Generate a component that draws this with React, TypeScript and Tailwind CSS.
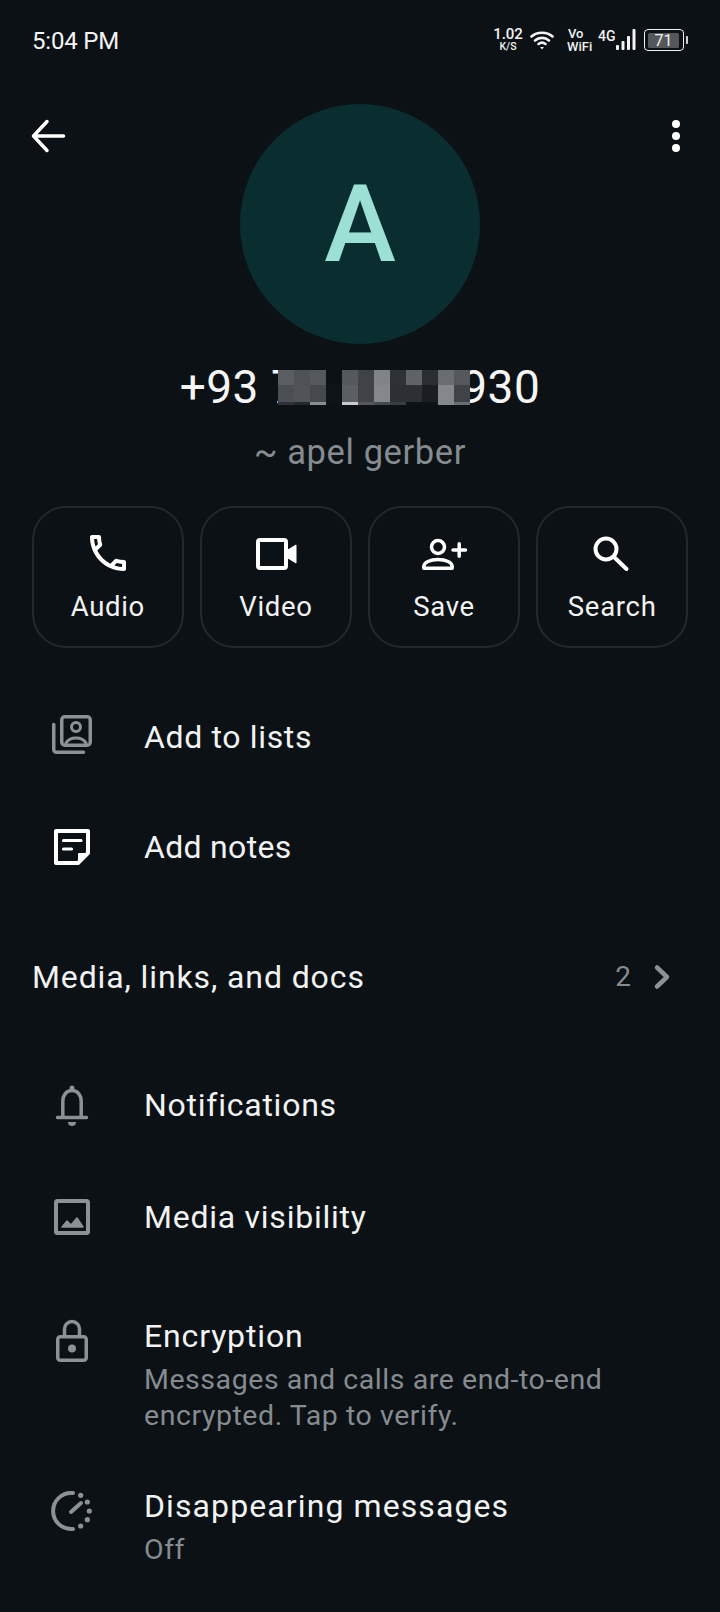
import React from "react";

const mosaic = [
  ["#5a5d61","#4e5256","#55585c","#0b1115","#55585c","#3f4347","#808487","#2e3236","#5f6266","#2a2e32","#6a6d70","#54575b"],
  ["#4b4e52","#505357","#45494c","#0e1317","#5b5e62","#3f4347","#85888b","#2c3034","#2c3034","#1a1e22","#85888b","#3f4347"],
  ["#2e3236","#24282c","#8a8d90","#0e1317","#c8cacb","#55585c","#45494c","#3a3d41","#0e1317","#0e1317","#85888b","#6a6d70"],
];

function Ico({ children, color = "#ffffff" }: { children: React.ReactNode; color?: string }) {
  return (
    <svg width="48" height="48" viewBox="0 0 48 48" fill="none" stroke={color} strokeLinecap="round" strokeLinejoin="round" className="shrink-0">
      {children}
    </svg>
  );
}

const G = "#8d9195";

function ActionButton({ label, icon }: { label: string; icon: React.ReactNode }) {
  return (
    <div className="h-[142px] rounded-[34px] border-2 border-[#25292d] flex flex-col items-center pt-[21px]">
      {icon}
      <div className="text-[27.5px] leading-[36px] mt-[12px] tracking-[0.7px] text-[#f1f2f2]">{label}</div>
    </div>
  );
}

function Row({ icon, title, sub, className, track = "tracking-[0.75px]" }: { icon: React.ReactNode; title: string; sub?: React.ReactNode; className: string; track?: string }) {
  return (
    <div className={`flex pl-[48px] ${className}`}>
      <div className="w-[96px] shrink-0">{icon}</div>
      <div>
        <div className={`text-[32px] leading-[44px] text-[#f1f2f2] ${track}`}>{title}</div>
        {sub && <div className="text-[28.5px] leading-[36px] tracking-[0.55px] text-[#868b90] mt-[4px]">{sub}</div>}
      </div>
    </div>
  );
}

export default function App() {
  return (
    <div className="w-[720px] h-[1612px] overflow-hidden bg-[#0b1115] text-white flex flex-col font-['Roboto',sans-serif]">
      {/* status bar */}
      <div className="h-[80px] shrink-0 flex items-center justify-between pl-[32px] pr-[32px]">
        <div className="text-[24px] leading-[30px] mt-[1px] text-[#f4f4f4] tracking-[-0.2px]">5:04 PM</div>
        <div className="flex items-center text-[#f2f2f2] font-medium">
          <div className="flex flex-col items-center w-[28px] -mt-[1px]">
            <div className="text-[15px] leading-[15px]">1.02</div>
            <div className="text-[10.5px] leading-[10.5px]">K/S</div>
          </div>
          <svg width="24" height="20" viewBox="0 0 24 20" fill="none" stroke="#f4f4f4" strokeWidth="2.6" strokeLinecap="round" className="ml-[8px]">
            <path d="M1.5 6.5C7 1.5 17 1.5 22.5 6.5" />
            <path d="M5 10.5C9 7 15 7 19 10.5" />
            <path d="M8.5 14C10.5 12.5 13.500 12.500 15.500 14" />
            <path d="M10 17h4l-2 2.500z" fill="#f4f4f4" stroke="none" />
          </svg>
          <div className="flex flex-col items-start ml-[13px] w-[25px]">
            <div className="text-[13px] leading-[13px] pl-[1px]">Vo</div>
            <div className="text-[13px] leading-[13px]">WiFi</div>
          </div>
          <div className="text-[14px] leading-[14px] ml-[6px] -mt-[8px]">4G</div>
          <svg width="20" height="22" viewBox="0 0 20 22" fill="#f4f4f4" className="ml-[0px]">
            <rect x="0" y="16" width="3" height="5" rx="1" />
            <rect x="5.500" y="12" width="3" height="9" rx="1" />
            <rect x="11" y="7" width="3" height="14" rx="1" />
            <rect x="16.500" y="0" width="3" height="21" rx="1" />
          </svg>
          <div className="ml-[8px] w-[40px] h-[22px] rounded-[4px] border-[1.5px] border-[#f0f0f0] flex items-center justify-center">
            <div className="w-[31px] h-[15px] rounded-[1.5px] bg-[#55585b] text-[#f0f0f0] text-[16px] leading-[15px] font-normal text-center">71</div>
          </div>
          <div className="ml-[2px] w-[2.500px] h-[8px] bg-[#d0d0d0] rounded-r-[1px]" />
        </div>
      </div>

      {/* top / avatar */}
      <div className="flex justify-between items-start px-[24px] pt-[24px] shrink-0">
        <div className="mt-[8px]">
          <Ico>
            <path d="M39.500 24H10M23 9.500L9.500 24L23 38.500" strokeWidth="3.500" />
          </Ico>
        </div>
        <div className="w-[240px] h-[240px] rounded-full bg-[#0a2d30] flex items-center justify-center">
          <div className="text-[108px] leading-[108px] font-medium text-[#9ce0d5]">A</div>
        </div>
        <div className="mt-[8px]">
          <Ico>
            <circle cx="28" cy="12" r="4" fill="#fff" stroke="none" />
            <circle cx="28" cy="24" r="4" fill="#fff" stroke="none" />
            <circle cx="28" cy="36" r="4" fill="#fff" stroke="none" />
          </Ico>
        </div>
      </div>

      {/* number */}
      <div className="mt-[16px] h-[54px] flex items-center justify-center text-[46px] leading-[54px] tracking-[0.5px] text-[#f5f5f5] shrink-0">
        <span>+93 7</span>
        <div className="grid grid-cols-[repeat(12,16px)] grid-rows-[15px_17px_3px] -ml-[19px] relative mr-[-9px]">
          {mosaic.flat().map((c, i) => (
            <div key={i} style={{ backgroundColor: c }} />
          ))}
        </div>
        <span>930</span>
      </div>
      <div className="mt-[16px] text-center text-[34.500px] leading-[44px] tracking-[0.6px] text-[#868b90] shrink-0">~ apel gerber</div>

      {/* actions */}
      <div className="grid grid-cols-4 gap-[16.500px] px-[32px] mt-[32px] shrink-0">
        <ActionButton
          label="Audio"
          icon={
            <svg width="48" height="48" viewBox="0 0 24 24" fill="#ffffff">
              <path d="M6.540 5c.060.890.210 1.760.450 2.590l-1.200 1.200c-.410-1.200-.670-2.470-.760-3.790h1.510m9.860 12.020c.850.240 1.720.390 2.600.450v1.490c-1.320-.090-2.590-.350-3.800-.750l1.200-1.190M7.500 3H4c-.550 0-1 .450-1 1 0 9.390 7.610 17 17 17 .550 0 1-.450 1-1v-3.490c0-.550-.450-1-1-1-1.240 0-2.450-.200-3.570-.570-.100-.040-.210-.050-.310-.050-.260 0-.510.100-.710.290l-2.200 2.200c-2.830-1.450-5.150-3.760-6.590-6.590l2.200-2.200c.280-.280.360-.670.250-1.020C8.700 6.450 8.500 5.250 8.500 4c0-.550-.450-1-1-1z" />
            </svg>
          }
        />
        <ActionButton
          label="Video"
          icon={
            <Ico>
              <rect x="6" y="11" width="28" height="28" rx="2" strokeWidth="4" />
              <path d="M35 21.500L44 16V34L35 28.500Z" fill="#fff" strokeWidth="1" />
            </Ico>
          }
        />
        <ActionButton
          label="Save"
          icon={
            <Ico>
              <circle cx="18" cy="18" r="6.500" strokeWidth="3.500" />
              <path d="M3.800 39.200V37.500C3.800 33.500 10 30.500 18 30.500S32.200 33.500 32.200 37.500V39.200Z" strokeWidth="3.500" />
              <path d="M33 21h12.500M39.200 14.800v12.500" strokeWidth="3.500" />
            </Ico>
          }
        />
        <ActionButton
          label="Search"
          icon={
            <Ico>
              <circle cx="18" cy="20" r="10.500" strokeWidth="4" />
              <path d="M26 28L38.500 40" strokeWidth="4" />
            </Ico>
          }
        />
      </div>

      {/* rows */}
      <Row
        className="mt-[65px] items-center h-[48px] shrink-0"
        title="Add to lists"
        track="tracking-[0.65px]"
        icon={
          <Ico color={G}>
            <rect x="13.750" y="3.750" width="28.500" height="28.500" rx="3" strokeWidth="3.500" />
            <path d="M5.750 11.500V36.500a2.750 2.750 0 0 0 2.750 2.750H35.500" strokeWidth="3.500" />
            <circle cx="28" cy="14" r="4.500" strokeWidth="3" />
            <path d="M18 30C20 26.500 23.500 25 28 25S36 26.500 38 30" strokeWidth="3" />
          </Ico>
        }
      />
      <Row
        className="mt-[62px] items-center h-[48px] shrink-0"
        title="Add notes"
        track="tracking-[0.3px]"
        icon={
          <Ico>
            <path d="M8 8H40V30L30 40H8Z" strokeWidth="4" />
            <path d="M31 39V31H39Z" fill="#fff" strokeWidth="2" />
            <path d="M15.500 17.500H33M15.500 26H23.500" strokeWidth="3.200" />
          </Ico>
        }
      />

      <div className="mt-[84px] h-[44px] flex items-center justify-between pl-[32px] pr-[47px] shrink-0">
        <div className="text-[32px] leading-[44px] tracking-[0.89px] text-[#f1f2f2]">Media, links, and docs</div>
        <div className="flex items-center">
          <div className="text-[28px] leading-[36px] text-[#868b90]">2</div>
          <svg width="20" height="28" viewBox="0 0 20 28" fill="none" stroke={G} strokeWidth="4.500" strokeLinecap="round" strokeLinejoin="round" className="ml-[22px]">
            <path d="M4 4.500L14 14L4 23.500" />
          </svg>
        </div>
      </div>

      <Row
        className="mt-[82px] items-center h-[48px] shrink-0"
        title="Notifications"
        icon={
          <Ico color={G}>
            <path d="M9.500 36.500H38.500M14.800 36V20.500C14.800 14 18.500 9.500 24 9.500S33.200 14 33.200 20.500V36" strokeWidth="3.500" />
            <circle cx="24" cy="7" r="2.500" fill={G} stroke="none" />
            <path d="M20 41h8a4 4 0 0 1-8 0z" fill={G} stroke="none" />
          </Ico>
        }
      />
      <Row
        className="mt-[64px] items-center h-[48px] shrink-0"
        title="Media visibility"
        icon={
          <Ico color={G}>
            <rect x="8" y="8" width="32" height="32" rx="1.500" strokeWidth="4" />
            <path d="M14 34L19 28L23 32L29 25L35 34Z" fill={G} strokeWidth="1.500" />
          </Ico>
        }
      />
      <Row
        className="mt-[73px] shrink-0"
        title="Encryption"
        track="tracking-[0.85px]"
        sub={
          <>
            Messages and calls are end-to-end
            <br />
            encrypted. Tap to verify.
          </>
        }
        icon={
          <div className="mt-[3px]">
            <Ico color={G}>
              <rect x="9.750" y="19.750" width="28.500" height="23.500" rx="2.500" strokeWidth="3.500" />
              <path d="M16.500 19V12a7.500 7.500 0 0 1 15 0v7" strokeWidth="3.500" />
              <circle cx="24" cy="31.500" r="4" fill={G} stroke="none" />
            </Ico>
          </div>
        }
      />
      <Row
        className="mt-[50px] shrink-0"
        title="Disappearing messages"
        track="tracking-[1.1px]"
        sub="Off"
        icon={
          <div className="mt-[3px]">
            <Ico color={G}>
              <path d="M25 6.100A18 18 0 1 0 25 41.900" strokeWidth="4" />
              <path d="M23 25L33 16" strokeWidth="4" />
              <g fill={G} stroke="none">
                <circle cx="32.700" cy="8.300" r="2.600" />
                <circle cx="39.300" cy="15" r="2.600" />
                <circle cx="41.300" cy="24" r="2.600" />
                <circle cx="39.300" cy="32.700" r="2.600" />
                <circle cx="32.700" cy="39" r="2.600" />
              </g>
            </Ico>
          </div>
        }
      />
    </div>
  );
}
